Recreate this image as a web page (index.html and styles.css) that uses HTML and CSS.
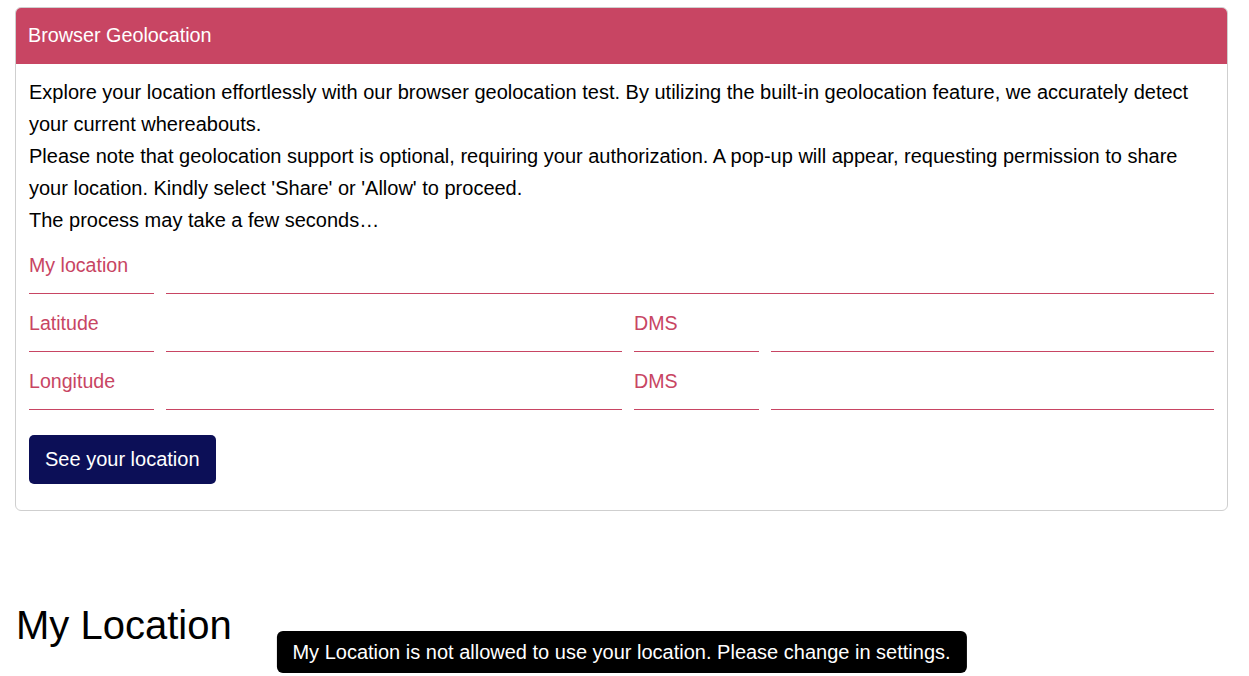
FILE: index.html
```html
<!DOCTYPE html>
<html lang="en">
<head>
    <meta charset="UTF-8">
    <meta name="viewport" content="width=device-width, initial-scale=1.0">
    <title>My Location</title>
    <link rel="stylesheet" href="styles.css">
</head>
<body>

<div class="card">
    <div class="card-header">Browser Geolocation</div>
    <div class="card-body">
        <p class="intro">
            Explore your location effortlessly with our browser geolocation test. By utilizing the built-in geolocation feature, we accurately detect your current whereabouts.<br>
            Please note that geolocation support is optional, requiring your authorization. A pop-up will appear, requesting permission to share your location. Kindly select 'Share' or 'Allow' to proceed.<br>
            The process may take a few seconds…
        </p>

        <div class="field-row">
            <label class="field-label">My location</label>
            <input type="text" class="field-input wide" id="my-location">
        </div>
        <div class="field-row">
            <label class="field-label">Latitude</label>
            <input type="text" class="field-input" id="latitude">
            <label class="field-label">DMS</label>
            <input type="text" class="field-input" id="latitude-dms">
        </div>
        <div class="field-row">
            <label class="field-label">Longitude</label>
            <input type="text" class="field-input" id="longitude">
            <label class="field-label">DMS</label>
            <input type="text" class="field-input" id="longitude-dms">
        </div>

        <button class="btn-locate">See your location</button>
    </div>
</div>

<h1 class="page-title">My Location</h1>

<div class="toast">My Location is not allowed to use your location. Please change in settings.</div>

</body>
</html>
```

FILE: styles.css
```css
body {
    font-family: "Liberation Sans", Arial, sans-serif;
    color: #000;
    background-color: #fff;
    margin: 0;
    padding: 7px 21px 0 15px;
}

.card {
    border: 1px solid #cfcfcf;
    border-radius: 6px;
    overflow: hidden;
}

.card-header {
    background-color: #c84563;
    color: white;
    font-size: 19.8px;
    padding: 0 12px;
    height: 56px;
    line-height: 54px;
}

.card-body {
    padding: 12px 13px 26px 13px;
}

.intro {
    font-size: 20px;
    line-height: 32px;
    margin: 0;
}

.field-row {
    display: grid;
    grid-template-columns: 125px 456px 125px 1fr;
    column-gap: 12px;
    height: 58px;
}

.field-label {
    color: #c84563;
    font-size: 19.6px;
    padding-top: 18px;
    border-bottom: 1px solid #c84563;
    box-sizing: border-box;
}

.field-input {
    min-width: 0;
    border: none;
    border-bottom: 1px solid #c84563;
    outline: none;
    font-size: 18px;
    background: transparent;
}

.field-input.wide {
    grid-column: 2 / 5;
}

.btn-locate {
    margin-top: 25px;
    background-color: #0c0f57;
    color: white;
    font-family: "Liberation Sans", Arial, sans-serif;
    font-size: 20px;
    border: none;
    border-radius: 5px;
    padding: 0 16px;
    height: 49px;
    cursor: pointer;
}

.page-title {
    font-size: 40px;
    font-weight: normal;
    margin: 92px 0 0 1px;
}

.toast {
    position: fixed;
    left: calc(50% - 3px);
    bottom: 3px;
    transform: translateX(-50%);
    background-color: #000;
    color: white;
    font-size: 20px;
    border-radius: 6px;
    padding: 0 16px;
    height: 42px;
    line-height: 42px;
    white-space: nowrap;
}
```
